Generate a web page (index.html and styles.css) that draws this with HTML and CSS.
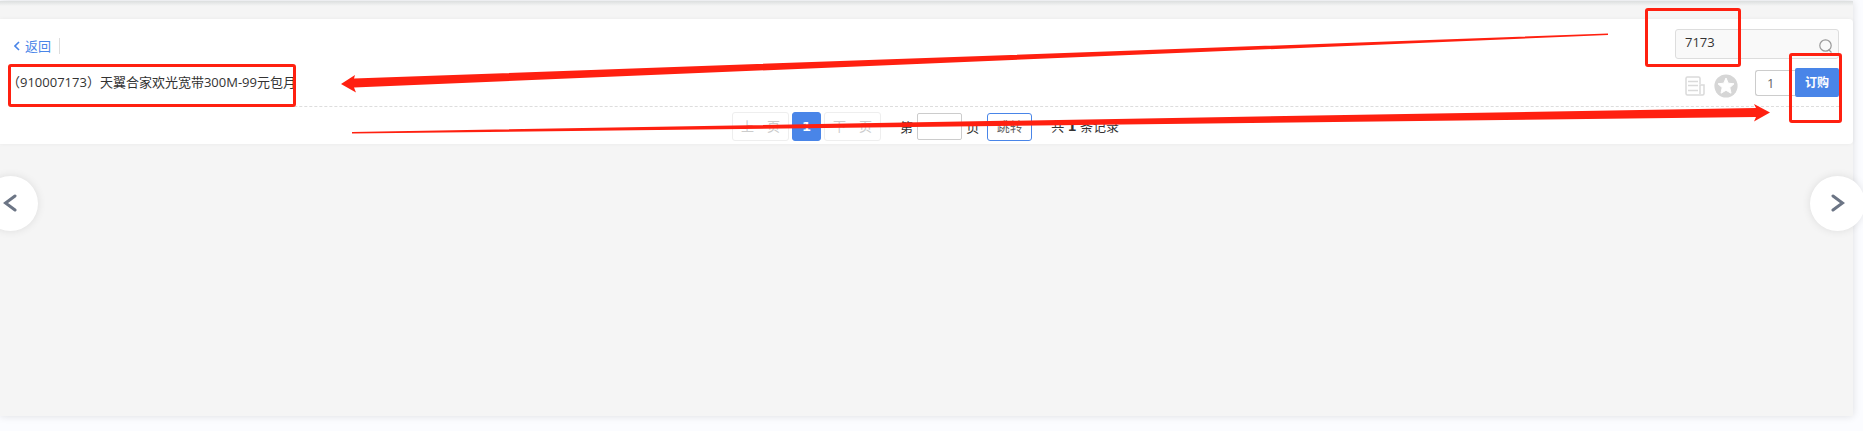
FILE: index.html
```html
<!DOCTYPE html>
<html lang="zh-CN">

<head>
    <meta charset="UTF-8">
    <meta name="viewport" content="width=device-width, initial-scale=1.0">
    <title>订购</title>
    <link rel="stylesheet" href="styles.css">
</head>

<body>
    <div class="page">
        <div class="card">
            <!-- Back link and search -->
            <div class="toolbar">
                <a class="back" href="#">
                    <svg width="6" height="10" viewBox="0 0 6 10"><path d="M5 1 1 5l4 4" fill="none" stroke="currentColor" stroke-width="1.6"/></svg>
                    返回
                </a>
                <form class="search">
                    <input type="text" value="7173" aria-label="搜索">
                    <button type="button" aria-label="搜索">
                        <svg width="14" height="14" viewBox="0 0 14 14" fill="none" stroke="currentColor" stroke-width="1.2"><circle cx="6.5" cy="6.5" r="5.7"/><path d="m9.5 10.5 3 3"/></svg>
                    </button>
                </form>
            </div>

            <!-- Result row -->
            <div class="item">
                <span class="item-name">（910007173）天翼合家欢光宽带300M-99元包月</span>
                <div class="item-actions">
                    <button type="button" class="icon-btn" aria-label="详情">
                        <svg width="20" height="20" viewBox="0 0 20 20" fill="none" stroke="#dadada" stroke-width="1.5"><path d="M15 8V2.500Q15 1 13.500 1h-11Q1 1 1 2.500v15Q1 19 2.500 19h15q1.500 0 1.500-1.500V9h-4v9M3 5.500h10M3 9.500h10M3 14.500h10"/></svg>
                    </button>
                    <button type="button" class="icon-btn" aria-label="收藏">
                        <svg width="24" height="24" viewBox="0 0 24 24"><circle cx="12" cy="12" r="11.600" fill="#d6d6d6"/><path d="m12 4 2.300 5.200 5.700.6-4.200 3.800 1.200 5.600-5-2.900-5 2.900 1.200-5.600L4 9.800l5.700-.6z" fill="#fff" stroke="#fff" stroke-linejoin="round"/></svg>
                    </button>
                    <input type="text" class="quantity" value="1" aria-label="数量">
                    <button type="button" class="order-btn">订购</button>
                </div>
            </div>

            <!-- Pagination -->
            <div class="pagination">
                <button type="button" class="page-btn" disabled>上一页</button>
                <button type="button" class="page-btn current">1</button>
                <button type="button" class="page-btn" disabled>下一页</button>
                <label class="jump">第 <input type="text"> 页</label>
                <button type="button" class="jump-btn">跳转</button>
                <span class="total">共 <b>1</b> 条记录</span>
            </div>
        </div>
    </div>

    <!-- Side arrows -->
    <button type="button" class="nav nav-prev" aria-label="上一个">
        <svg width="14" height="18" viewBox="0 0 14 18"><path d="M12 2 2.500 9l9.500 7" fill="none" stroke="#6c7585" stroke-width="3" stroke-linecap="round"/></svg>
    </button>
    <button type="button" class="nav nav-next" aria-label="下一个">
        <svg width="14" height="18" viewBox="0 0 14 18"><path d="m2 2 9.500 7L2 16" fill="none" stroke="#6c7585" stroke-width="3" stroke-linecap="round"/></svg>
    </button>

    <!-- Red marks -->
    <div class="mark mark-name"></div>
    <div class="mark mark-search"></div>
    <div class="mark mark-order"></div>
    <svg class="mark-arrows" viewBox="0 0 1863 150" preserveAspectRatio="none">
        <path d="m341 84 14-9-1 3.500L1608 33.500v1.500L354 87.500l2 5z"/>
        <path d="m1770 112.500-16-8.500 2 4L352 132v1.500L1756 117l-2 4.500z"/>
    </svg>
</body>

</html>
```

FILE: styles.css
```css
* {
    box-sizing: border-box;
}

body {
    margin: 0;
    min-height: 100vh;
    padding: 1px 10px 15px 0;
    display: flex;
    position: relative;
    overflow: hidden;
    background-color: #fbfcff;
    color: #333;
    font-family: "Open Sans", "Noto Sans CJK SC", sans-serif;
    font-size: 13px;
    line-height: 20px;
}

button,
input {
    margin: 0;
    padding: 0;
    font: inherit;
    color: inherit;
}

button {
    border: none;
    background: none;
    cursor: pointer;
}

svg {
    display: block;
}

.page {
    flex: 1;
    padding-top: 18px;
    background: linear-gradient(#dcdfdf, #f5f5f5 5px);
    box-shadow: 0 0 8px rgba(0, 0, 0, 0.12);
}

.card {
    padding: 10px 14px 3px;
    background-color: #fff;
    border-radius: 0 4px 4px 0;
    box-shadow: 0 0 4px rgba(0, 0, 0, 0.05);
}

.toolbar {
    display: flex;
    justify-content: space-between;
    align-items: flex-start;
}

.back {
    display: flex;
    align-items: center;
    gap: 5px;
    height: 16px;
    margin-top: 9px;
    padding-right: 8px;
    padding-bottom: 1px;
    border-right: 1px solid #ddd;
    color: #4985e8;
    text-decoration: none;
}

.search {
    display: flex;
    width: 164px;
    height: 30px;
    padding: 0 5px 0 9px;
    border: 1px solid #ddd;
    border-radius: 3px;
    background-color: #f9f9f9;
}

.search input {
    flex: 1;
    min-width: 0;
    height: 24px;
    border: none;
    background: none;
}

.search button {
    padding-top: 4px;
    color: #999;
}

/* Result row */
.item {
    display: flex;
    justify-content: space-between;
    align-items: center;
    height: 48px;
    border-bottom: 1px dashed #ddd;
}

.item-name {
    margin-left: -7px;
    padding-bottom: 2px;
}

.item-actions {
    display: flex;
    align-items: center;
}

.icon-btn {
    margin-right: 9px;
    padding-top: 6px;
}

.icon-btn + .quantity {
    margin-left: 8px;
}

.quantity {
    width: 40px;
    height: 26px;
    padding-left: 11px;
    border: 1px solid #ccc;
    border-right: none;
    border-radius: 3px 0 0 3px;
    color: #666;
}

.order-btn {
    width: 44px;
    height: 29px;
    border-radius: 2px;
    background-color: #4985e8;
    color: #fff;
    font-size: 12px;
    font-weight: bold;
}

/* Pagination */
.pagination {
    display: flex;
    justify-content: center;
    align-items: center;
    gap: 3px;
    padding: 5px 2px 0 0;
}

.page-btn {
    height: 29px;
    padding: 0 8px 2px;
    border: 1px solid #eee;
    border-radius: 3px;
    color: #ccc;
}

.page-btn.current {
    padding: 0 9px;
    border-color: #4985e8;
    background-color: #4985e8;
    color: #fff;
    font-family: "DejaVu Sans", sans-serif;
    font-weight: bold;
}

.jump {
    display: flex;
    align-items: center;
    gap: 4px;
    margin-left: 16px;
}

.jump input {
    width: 45px;
    height: 27px;
    border: 1px solid #ccc;
    border-radius: 2px;
}

.jump-btn {
    width: 45px;
    height: 28px;
    margin-left: 5px;
    padding-bottom: 2px;
    border: 1px solid #4985e8;
    border-radius: 3px;
    color: #666;
}

.total {
    margin-left: 16px;
}

.total b {
    font-family: "DejaVu Sans", sans-serif;
}

/* Side arrows */
.nav {
    display: flex;
    justify-content: center;
    align-items: center;
    position: absolute;
    top: 176px;
    width: 55px;
    height: 55px;
    padding-bottom: 2px;
    border-radius: 50%;
    background-color: #fff;
    box-shadow: 0 0 8px rgba(0, 0, 0, 0.1);
}

.nav-prev {
    left: -17px;
    padding-right: 2px;
}

.nav-next {
    right: -2px;
}

/* Red marks */
.mark {
    position: absolute;
    border: 3px solid #ff2010;
    border-radius: 3px;
    pointer-events: none;
}

.mark-name {
    top: 64px;
    left: 8px;
    width: 288px;
    height: 43px;
}

.mark-search {
    top: 8px;
    right: 122px;
    width: 96px;
    height: 59px;
}

.mark-order {
    top: 53px;
    right: 21px;
    width: 53px;
    height: 70px;
}

.mark-arrows {
    position: absolute;
    top: 0;
    left: 0;
    width: 100%;
    height: 150px;
    fill: #ff2010;
    pointer-events: none;
}
```
